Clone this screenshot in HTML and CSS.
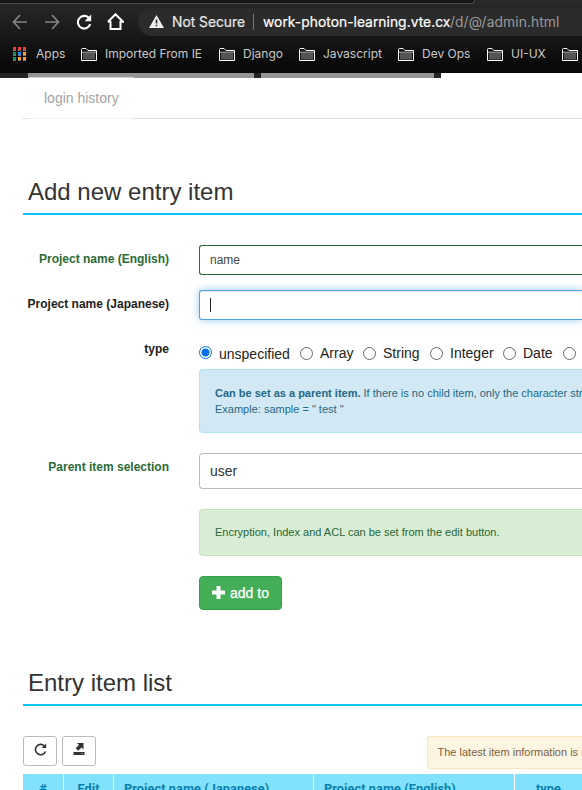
FILE: index.html
```html
<!DOCTYPE html>
<html lang="en">
<head>
<meta charset="utf-8">
<title>Admin</title>
<link rel="stylesheet" href="styles.css">
</head>
<body>
<svg class="defs" width="0" height="0"><defs>
<symbol id="folder" viewBox="0 0 16 13"><path d="M.5 12.500V1.500Q.5.500 1.500.500H5l2 2h8.500v10z" fill="#111" stroke="#fff"/><path d="M2 5h12v6.500H2z" fill="#555"/><path d="M1 4.200h14" stroke="#ddd" stroke-width=".8"/></symbol>
</defs></svg>
<header class="browser">
  <div class="tabs"><div class="tab-edge"></div></div>
  <div class="toolbar">
    <svg class="nav back" viewBox="0 0 16 16"><path d="M15 8H2M8 1 1.500 8 8 15" fill="none" stroke="#858585" stroke-width="1.700"/></svg>
    <svg class="nav forward" viewBox="0 0 16 16"><path d="M1 8h13M8 1l6.500 7L8 15" fill="none" stroke="#858585" stroke-width="1.700"/></svg>
    <svg class="nav reload" viewBox="0 0 16 16"><path d="M14.200 10.200A6.300 6.300 0 1 1 12.600 3.600" fill="none" stroke="#fff" stroke-width="2.100"/><path d="M15.200 .6v6.600H8.600z" fill="#fff"/></svg>
    <svg class="nav home" viewBox="0 0 16 16"><path d="M3.300 7.500V15h9.400V7.500M.9 8.300 8 1.200l7.100 7.100h-2.800M.9 8.300h2.800" fill="none" stroke="#fff" stroke-width="1.900"/></svg>
    <div class="address">
      <svg class="warn" viewBox="0 0 15 13"><path d="M7.500 0 15 13H0z" fill="#eee"/><path d="M7.500 4.500v4M7.500 9.700v1.600" stroke="#2a2a2a" stroke-width="1.600"/></svg>
      <span class="secure">Not Secure</span><i class="bar"></i><span class="host">work-photon-learning.vte.cx</span><span class="path">/d/@/admin.html</span>
    </div>
  </div>
  <nav class="bookmarks">
    <div class="apps"><svg width="13" height="14" viewBox="0 0 13 14"><path d="M0 0h3v3H0zM5 0h3v3H5zM10 0h3v3h-3z" fill="#f33b35"/><path d="M0 5h3v3H0zM0 10h3v3H0z" fill="#159653"/><path d="M5 5h3v3H5z" fill="#1688ff"/><path d="M10 5h3v3h-3zM5 10h3v3H5zM10 10h3v3h-3z" fill="#ffa326"/><path d="M0 3h3v1H0zM5 3h3v1H5zM10 3h3v1h-3zM0 8h3v1H0zM5 8h3v1H5zM10 8h3v1h-3zM0 13h3v1H0zM5 13h3v1H5zM10 13h3v1h-3z" fill="#777"/></svg><span>Apps</span></div>
    <div class="mark imported"><svg><use href="#folder"/></svg><span>Imported From IE</span></div>
    <div class="mark django"><svg><use href="#folder"/></svg><span>Django</span></div>
    <div class="mark javascript"><svg><use href="#folder"/></svg><span>Javascript</span></div>
    <div class="mark devops"><svg><use href="#folder"/></svg><span>Dev Ops</span></div>
    <div class="mark uiux"><svg><use href="#folder"/></svg><span>UI-UX</span></div>
    <div class="mark"><svg><use href="#folder"/></svg></div>
  </nav>
</header>
<div class="site-tabs"><i class="first"><b></b></i><i class="second"></i><i class="third"></i></div>
<main>
  <div class="subtabs"><span>login history</span></div>
  <h2 class="add-heading"><span>Add new entry item</span></h2>
  <form>
    <div class="row english"><label class="valid">Project name (English)</label><div class="control input">name</div></div>
    <div class="row japanese"><label>Project name (Japanese)</label><div class="control input focused"><i class="caret"></i></div></div>
    <div class="row type"><label>type</label>
      <div class="options">
        <div class="radios">
          <span class="option unspecified"><i class="radio checked"></i><span>unspecified</span></span>
          <span class="option array"><i class="radio"></i><span>Array</span></span>
          <span class="option string"><i class="radio"></i><span>String</span></span>
          <span class="option integer"><i class="radio"></i><span>Integer</span></span>
          <span class="option date"><i class="radio"></i><span>Date</span></span>
          <span class="option"><i class="radio"></i></span>
        </div>
        <div class="alert info"><b>Can be set as a parent item.</b> If there is no child item, only the character string<br>Example: sample = " test "</div>
      </div>
    </div>
    <div class="row parent"><label class="valid">Parent item selection</label><div class="control select">user</div></div>
    <div class="alert success">Encryption, Index and ACL can be set from the edit button.</div>
    <button type="button" class="add"><svg width="13" height="13" viewBox="0 0 13 13"><path d="M5 0h3q.5 0 .5.500v4h4q.5 0 .5.500v3q0 .5-.5.500h-4v4q0 .5-.5.500H5q-.5 0-.5-.5v-4h-4Q0 8.500 0 8V5q0-.5.500-.5h4v-4Q4.500 0 5 0z" fill="#fff"/></svg><span>add to</span></button>
  </form>
  <h2 class="list-heading"><span>Entry item list</span></h2>
  <div class="actions">
    <button type="button" class="tool"><svg width="13" height="13" viewBox="0 0 13 13"><path d="M11.500 8.500A5.200 5.200 0 1 1 10.300 2.800" fill="none" stroke="#333" stroke-width="1.600"/><path d="M12.200 .4v4.700H7.500z" fill="#333"/></svg></button>
    <button type="button" class="tool"><svg width="12" height="13" viewBox="0 0 12 13"><path d="M4 0h6.500v6.500L8.500 4.500 5.300 7.800 2.600 5.200 6 2z" fill="#333"/><path d="M.5 9h11v3H.5z" fill="#333"/><path d="M8.500 10.500H10" stroke="#ccc" stroke-width=".7"/></svg></button>
    <div class="notice">The latest item information is <span>not reflected</span></div>
  </div>
  <div class="table-head"><div>#</div><div>Edit</div><div class="name"><span>Project name (Japanese)</span></div><div class="name"><span>Project name (English)</span></div><div>type</div></div>
</main>
</body>
</html>
```
FILE: styles.css
```css
* { box-sizing: border-box; }
html, body { margin: 0; width: 582px; height: 790px; overflow: hidden; background: #fff; }
body { font-family: "Liberation Sans", Arial, sans-serif; color: #333; }
.defs { display: none; }
span, b, label { white-space: nowrap; }
svg { display: block; flex: none; }

.browser { height: 73px; background: linear-gradient(#292929, #1b1b1b 30px, #0b0b0b 60px, #080808); font-family: Inter, sans-serif; }
.tabs { height: 4px; background: #292929; overflow: hidden; }
.tab-edge { width: 475px; height: 4px; background: #171717; border-bottom: 1px solid #484848; border-right: 1px solid #484848; border-radius: 0 0 5px 0; }
.toolbar { display: flex; align-items: center; height: 33px; padding: 3px 0 1px 12px; }
.nav { width: 16px; height: 16px; }
.forward { margin-left: 16px; }
.reload { margin-left: 16px; }
.home { width: 17px; height: 17px; margin-left: 15px; }
.address { display: flex; align-items: center; flex: 1; height: 28px; margin-left: 14px; padding-left: 11px; background: #2b2b2b; border-radius: 14px 0 0 14px; font-size: 13.8px; overflow: hidden; }
.warn { width: 15px; height: 13px; }
.secure { width: 73px; margin-left: 8px; color: #e7e7e7; -webkit-text-stroke: .2px #e7e7e7; }
.bar { width: 1px; height: 16px; margin: 0 9px 0 8px; background: #777; }
.host { color: #fff; width: 187px; letter-spacing: .04px; -webkit-text-stroke: .2px #fff; }
.path { color: #9a9a9a; letter-spacing: .1px; }
.bookmarks { display: flex; height: 34px; align-items: center; padding-left: 13px; font-size: 12px; color: #c8c8c8; }
.bookmarks span { padding-bottom: 2px; }
.apps { display: flex; align-items: center; gap: 10px; width: 68px; }
.mark { display: flex; align-items: center; flex: none; gap: 8px; }
.mark svg { width: 16px; height: 13px; }
.imported { width: 138px; }
.django { width: 80px; }
.javascript { width: 99px; }
.devops { width: 89px; }
.uiux { width: 75px; }

.site-tabs { display: flex; height: 5px; padding-left: 28px; background: #252525; }
.first { width: 226px; background: #969696; padding: 4px 0 0 1px; }
.first b { display: block; width: 105px; height: 1px; background: #d0d0d0; }
.second { width: 173px; margin-left: 7px; background: #969696; }
.third { flex: 1; margin-left: 7px; background: #fff; }

main { padding-left: 23px; }
.subtabs { height: 41px; padding: 11px 0 0 21px; border-bottom: 1px solid; border-image: linear-gradient(90deg, #ddd 5px, #f3f3f3 5px, #f3f3f3 112px, #ddd 112px) 1; font-size: 14px; line-height: 18px; color: #a3a3a3; }
h2 { margin: 0; padding-left: 5px; height: 40px; line-height: 33px; border-bottom: 2px solid #08c4f8; font-size: 24px; font-weight: 400; }
.add-heading { margin-top: 56px; }
form { padding-top: 30px; height: 451px; }
.row { display: flex; }
.row label { width: 146px; margin-right: 30px; padding-top: 6px; flex: none; text-align: right; font-size: 12px; line-height: 16px; font-weight: 700; color: #222; }
.row .valid { color: #2b6b37; }
.control { flex: 1; border: 1px solid #bbb; border-right: 0; border-radius: 4px 0 0 4px; padding-left: 10px; }
.input { height: 30px; border-color: #2b6b37; border-radius: 3px 0 0 3px; font-size: 12px; line-height: 28px; color: #444; }
.japanese { margin-top: 15px; }
.focused { border-color: #4da3e1; box-shadow: inset 0 1px 1px rgba(0,0,0,.08), 0 0 8px rgba(77,163,225,.55); }
.caret { display: block; width: 1px; height: 14px; margin-top: 7px; background: #222; }
.type { margin-top: 15px; }
.options { flex: 1; min-width: 0; }
.radios { display: flex; height: 34px; padding-top: 9px; font-size: 14px; line-height: 17px; color: #222; overflow: hidden; }
.option { display: flex; flex: none; gap: 7px; }
.option > span { margin-top: 1px; }
.radio { width: 13px; height: 13px; margin-top: 3px; border: 1px solid #666; border-radius: 50%; flex: none; }
.checked { margin-top: 2px; border: 1.5px solid #0870f3; background: radial-gradient(circle, #0870f3 3.8px, #fff 4.3px); }
.unspecified { width: 101px; }
.unspecified > span { margin-top: 2px; }
.array { width: 63px; }
.string { width: 67px; }
.integer { width: 73px; }
.date { width: 60px; }
.alert { border: 1px solid #aee4eb; border-right: 0; border-radius: 4px 0 0 4px; padding: 15px; font-size: 11px; line-height: 16px; white-space: nowrap; overflow: hidden; }
.info { height: 64px; color: #246785; background: #d2e9f5; }
.parent { margin-top: 20px; }
.select { height: 36px; font-size: 14px; line-height: 34px; border-color: #bbb; color: #333; }
.success { margin: 20px 0 0 176px; height: 47px; padding-top: 14px; background: #d9edd5; border-color: #c5e2ba; color: #286537; }
.add { display: flex; align-items: center; gap: 5px; width: 83px; height: 34px; margin: 20px 0 0 176px; padding: 0 0 0 12px; border: 1px solid #35a14b; border-radius: 4px; background: #44ae57; color: #fff; font: 14px "Liberation Sans", Arial, sans-serif; -webkit-text-stroke: .25px #fff; }
.add svg { margin-top: -2px; }
.actions { display: flex; height: 68px; padding-top: 30px; }
.tool { display: flex; align-items: center; justify-content: center; width: 34px; height: 30px; margin: 0 5px 0 0; padding: 0 0 3px; border: 1px solid #bbb; border-radius: 3px; background: #fff; }
.notice { flex: 1; height: 33px; margin-left: 326px; padding-left: 9.5px; border: 1px solid #f7e5bf; border-right: 0; border-radius: 3px 0 0 3px; background: #fcf5e2; color: #7c603c; font-size: 11px; line-height: 31px; white-space: nowrap; overflow: hidden; }
.table-head { display: grid; grid-template-columns: 40px 49px 199px 200px 1fr; gap: 1px; height: 26px; font: 700 12.7px/29px Roboto, sans-serif; letter-spacing: .1px; color: #0780ad; text-align: center; }
.table-head div { background: #82e1fc; }
.table-head .name { text-align: left; padding-left: 10px; }
```
